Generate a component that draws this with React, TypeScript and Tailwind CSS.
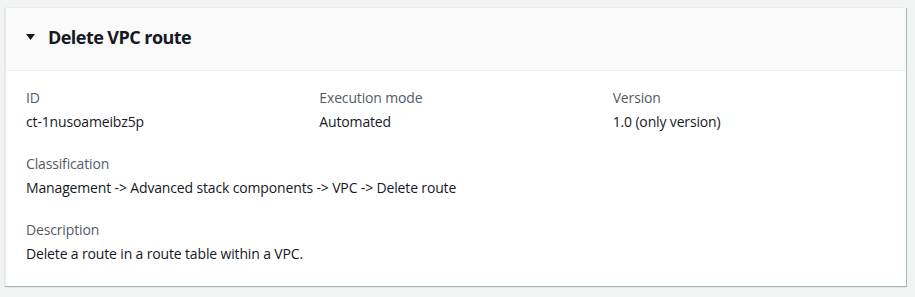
import React from "react";

function Field({ label, value }: { label: string; value: string }) {
  return (
    <div className="flex flex-col tracking-[-0.15px]">
      <div className="text-[14px] leading-[22px] text-[#545b64]">{label}</div>
      <div className="mt-[2px] text-[14px] leading-[22px] text-[#16191f]">{value}</div>
    </div>
  );
}

export default function App() {
  return (
    <div
      className="min-h-[297px] w-[915px] bg-[#f2f3f3] pl-[5px] pr-[9px] pt-[7px] pb-[11px]"
      style={{ fontFamily: '"Open Sans", "Noto Sans", Arial, sans-serif' }}
    >
      <div className="h-[279px] border-l border-t border-[#eaeded] bg-white shadow-[1px_1px_0_0_#aab7b8,0_1px_1px_0_rgba(0,28,36,0.3)]">
        <div className="flex h-[63px] items-center border-b border-[#eaeded] bg-[#fafafa] pb-[5px] pl-[20px]">
          <svg width="9" height="6" viewBox="0 0 9 6" className="mr-[13px]">
            <polygon points="0,0 9,0 4.5,6" fill="#16191f" />
          </svg>
          <span className="text-[18px] font-bold leading-[22px] text-[#16191f] tracking-[-0.55px]">
            Delete VPC route
          </span>
        </div>
        <div className="flex flex-col gap-[20px] px-[20px] pt-[16px]">
          <div className="grid grid-cols-3 gap-x-[20px]">
            <Field label="ID" value="ct-1nusoameibz5p" />
            <Field label="Execution mode" value="Automated" />
            <Field label="Version" value="1.0 (only version)" />
          </div>
          <Field
            label="Classification"
            value="Management -> Advanced stack components -> VPC -> Delete route"
          />
          <Field label="Description" value="Delete a route in a route table within a VPC." />
        </div>
      </div>
    </div>
  );
}
